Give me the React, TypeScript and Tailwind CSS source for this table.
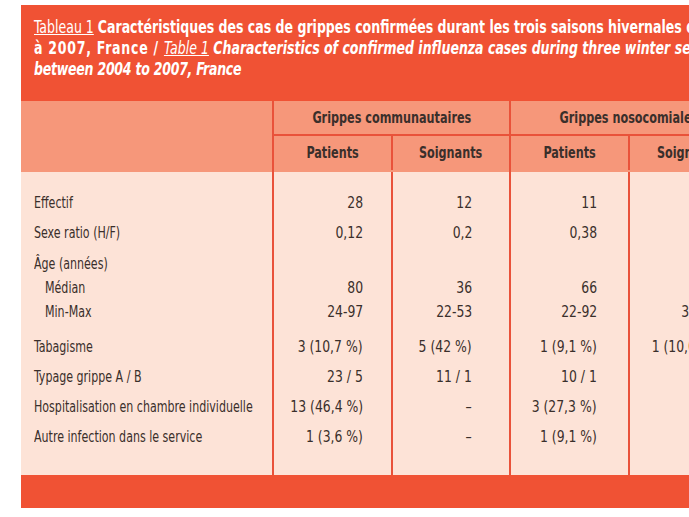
const font = "font-['DejaVu_Sans_Condensed','DejaVu_Sans',sans-serif]";
const line = 'border-[#e9523a]';

const rows = [
  { label: 'Effectif', vals: ['28', '12', '11', '', ''] },
  { label: 'Sexe ratio (H/F)', vals: ['0,12', '0,2', '0,38', '', ''] },
];

const ageRows = [
  { label: 'Âge (années)', vals: ['', '', '', '', ''], indent: false },
  { label: 'Médian', vals: ['80', '36', '66', '', ''], indent: true },
  { label: 'Min-Max', vals: ['24-97', '22-53', '22-92', '31-55', ''], indent: true },
];

const rows2 = [
  { label: 'Tabagisme', vals: ['3 (10,7 %)', '5 (42 %)', '1 (9,1 %)', '1 (10,0 %)', ''] },
  { label: 'Typage grippe A / B', vals: ['23 / 5', '11 / 1', '10 / 1', '', ''] },
  { label: 'Hospitalisation en chambre individuelle', vals: ['13 (46,4 %)', '–', '3 (27,3 %)', '', ''] },
  { label: 'Autre infection dans le service', vals: ['1 (3,6 %)', '–', '1 (9,1 %)', '', ''] },
];

const cols = 'grid grid-cols-[251px_119px_118px_119px_119px_120px]';
const valPad = ['pr-[28px]', 'pr-[37px]', 'pr-[31px]', 'pr-[30px]', 'pr-[30px]'];

function Row({ label, vals, h, indent }: { label: string; vals: string[]; h: string; indent?: boolean }) {
  return (
    <div className={cols}>
      <div className={`${h} flex items-center whitespace-nowrap ${indent ? 'pl-[24px]' : 'pl-[13px]'}`}>
        {label && <span className="inline-block origin-left scale-x-[0.82]">{label}</span>}
      </div>
      {vals.map((v, i) => (
        <div key={i} className={`${h} flex items-center justify-end whitespace-nowrap border-l-2 ${line} ${valPad[i]}`}>
          {v && <span className="inline-block origin-right scale-x-[0.92]">{v}</span>}
        </div>
      ))}
    </div>
  );
}

function Head({ children }: { children: React.ReactNode }) {
  return <span className="inline-block whitespace-nowrap origin-center scale-x-[0.78]">{children}</span>;
}

export default function App() {
  return (
    <div className={`w-[689px] h-[517px] overflow-hidden bg-white pt-[5px] pl-[21px] ${font}`}>
      <div className="w-[780px] bg-[#f05234]">
        {/* title */}
        <div className="h-[96px] pt-[12px] pl-[13px] text-white text-[17px] leading-[21px] whitespace-nowrap">
          <div className="origin-left scale-x-[0.82]">
            <span className="underline font-normal">Tableau 1</span>{' '}
            <span className="font-bold">
              Caractéristiques des cas de grippes confirmées durant les trois saisons hivernales de 2004
            </span>
          </div>
          <div className="origin-left scale-x-[0.82] font-bold">
            <span className="tracking-[0.9px]">à 2007, France / </span>
            <span className="italic">
              <span className="underline font-normal">Table 1</span> Characteristics of confirmed influenza cases
              during three winter seasons
            </span>
          </div>
          <div className="origin-left scale-x-[0.82] font-bold italic tracking-[-0.3px]">
            between 2004 to 2007, France
          </div>
        </div>

        {/* header */}
        <div className="grid grid-cols-[251px_237px_238px_54px] bg-[#f6977a] text-[#3a2f2b] text-[16px] font-bold">
          <div className="h-[71px]"></div>
          <div className={`border-l-2 ${line} flex flex-col`}>
            <div className={`h-[35px] border-b-2 ${line} flex items-center justify-center`}>
              <Head>Grippes communautaires</Head>
            </div>
            <div className="grid grid-cols-[117px_118px] h-[34px]">
              <div className="flex items-center justify-center">
                <Head>Patients</Head>
              </div>
              <div className={`flex items-center justify-center border-l-2 ${line}`}>
                <Head>Soignants</Head>
              </div>
            </div>
          </div>
          <div className={`border-l-2 ${line} flex flex-col`}>
            <div className={`h-[35px] border-b-2 ${line} flex items-center justify-center`}>
              <Head>Grippes nosocomiales</Head>
            </div>
            <div className="grid grid-cols-[117px_119px] h-[34px]">
              <div className="flex items-center justify-center">
                <Head>Patients</Head>
              </div>
              <div className={`flex items-center justify-center border-l-2 ${line}`}>
                <Head>Soignants</Head>
              </div>
            </div>
          </div>
          <div className={`border-l-2 ${line}`}></div>
        </div>

        {/* body */}
        <div className="bg-[#fde3d7] text-[#3a2f2b] text-[15px]">
          <Row label="" vals={['', '', '', '', '']} h="h-[16px]" />
          {rows.map((r) => (
            <Row key={r.label} label={r.label} vals={r.vals} h="h-[30px]" />
          ))}
          <Row label="" vals={['', '', '', '', '']} h="h-[4px]" />
          {ageRows.map((r) => (
            <Row key={r.label} label={r.label} vals={r.vals} h="h-[24px]" indent={r.indent} />
          ))}
          <Row label="" vals={['', '', '', '', '']} h="h-[8px]" />
          {rows2.map((r) => (
            <Row key={r.label} label={r.label} vals={r.vals} h="h-[30px]" />
          ))}
          <Row label="" vals={['', '', '', '', '']} h="h-[23px]" />
        </div>

        {/* bottom bar */}
        <div className="h-[33px]"></div>
      </div>
    </div>
  );
}
